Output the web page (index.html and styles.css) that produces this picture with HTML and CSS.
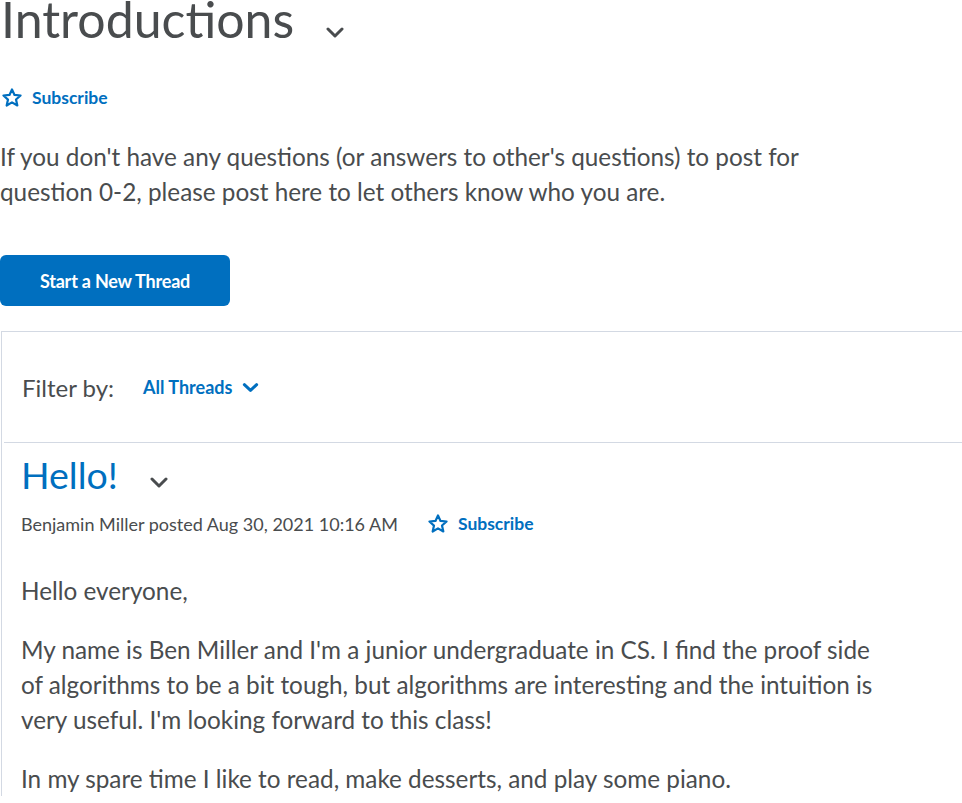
FILE: index.html
```html
<!DOCTYPE html>
<html lang="en">
<head>
<meta charset="utf-8">
<title>Introductions</title>
<link rel="stylesheet" href="styles.css">
</head>
<body>
<div class="page">
  <div class="topic-head">
    <h1 class="topic-title">Introductions</h1>
    <svg class="chev chev-title" viewBox="0 0 18 11" width="18" height="11"><path d="M2 2l7 7 7-7" fill="none" stroke="#494c4e" stroke-width="3" stroke-linecap="round" stroke-linejoin="round"/></svg>
  </div>
  <a class="subscribe subscribe-topic" href="#">
    <svg class="star" viewBox="0 0 24 24" width="22" height="22"><path d="M12 2.6l2.75 6.05 6.6.62-4.98 4.42 1.45 6.5L12 16.8l-5.82 3.4 1.45-6.5-4.98-4.42 6.6-.62z" fill="none" stroke="#006fbf" stroke-width="2.4" stroke-linejoin="round"/></svg>
    <span>Subscribe</span>
  </a>
  <p class="topic-desc">If you don't have any questions (or answers to other's questions) to post for question 0-2, please post here to let others know who you are.</p>
  <button class="btn-primary" type="button">Start a New Thread</button>
  <section class="threads">
    <div class="filter-row">
      <span class="filter-label">Filter by:</span>
      <a class="filter-select" href="#">All Threads
        <svg class="chev" viewBox="0 0 18 11" width="17" height="11"><path d="M2.5 2.5l6.5 6 6.5-6" fill="none" stroke="#006fbf" stroke-width="3.2" stroke-linecap="round" stroke-linejoin="round"/></svg>
      </a>
    </div>
    <article class="thread">
      <div class="thread-head">
        <h2 class="thread-title">Hello!</h2>
        <svg class="chev chev-thread" viewBox="0 0 18 11" width="18" height="11"><path d="M2 2l7 7 7-7" fill="none" stroke="#494c4e" stroke-width="3" stroke-linecap="round" stroke-linejoin="round"/></svg>
      </div>
      <div class="thread-meta">
        <span class="meta-text">Benjamin Miller posted Aug 30, 2021 10:16 AM</span>
        <a class="subscribe" href="#">
          <svg class="star" viewBox="0 0 24 24" width="22" height="22"><path d="M12 2.6l2.75 6.05 6.6.62-4.98 4.42 1.45 6.5L12 16.8l-5.82 3.4 1.45-6.5-4.98-4.42 6.6-.62z" fill="none" stroke="#006fbf" stroke-width="2.4" stroke-linejoin="round"/></svg>
          <span>Subscribe</span>
        </a>
      </div>
      <div class="thread-body">
        <p>Hello everyone,</p>
        <p>My name is Ben Miller and I'm a junior undergraduate in CS. I find the proof side of algorithms to be a bit tough, but algorithms are interesting and the intuition is very useful. I'm looking forward to this class!</p>
        <p>In my spare time I like to read, make desserts, and play some piano.</p>
      </div>
    </article>
  </section>
</div>
</body>
</html>
```

FILE: styles.css
```css
html, body {
  margin: 0;
  padding: 0;
  background: #ffffff;
}
body {
  font-family: Lato, "Open Sans", "Liberation Sans", sans-serif;
  color: #494c4e;
  overflow: hidden;
}
.page {
  padding: 0;
}
.topic-head {
  display: flex;
  align-items: flex-start;
  height: 38px;
}
.topic-title {
  margin: 0;
  font-size: 50px;
  font-weight: 400;
  line-height: 38px;
  color: #494c4e;
  padding-left: 1px;
}
.chev {
  display: block;
  flex: none;
}
.chev-title {
  margin-left: 32px;
  margin-top: 27px;
}
.subscribe {
  display: inline-flex;
  align-items: center;
  gap: 9px;
  color: #006fbf;
  text-decoration: none;
  font-weight: 700;
  font-size: 17.5px;
  line-height: 22px;
}
.subscribe-topic {
  margin-top: 49px;
  margin-left: 1px;
}
.topic-desc {
  margin: 27px 0 0 0;
  font-size: 24.3px;
  line-height: 35px;
  max-width: 830px;
}
.btn-primary {
  display: block;
  margin-top: 46px;
  width: 230px;
  height: 51px;
  border: none;
  border-radius: 6px;
  background: #006fbf;
  color: #ffffff;
  font-family: Lato, "Open Sans", sans-serif;
  font-weight: 700;
  font-size: 18px;
  letter-spacing: -0.2px;
  padding: 0;
}
.threads {
  margin-top: 25px;
  margin-left: 1px;
  border-top: 1px solid #d3d9e3;
  border-left: 1px solid #d3d9e3;
}
.filter-row {
  display: flex;
  align-items: center;
  height: 110px;
  padding-left: 18px;
  margin-left: 2px;
  border-bottom: 1px solid #d3d9e3;
}
.filter-label {
  font-size: 24px;
}
.filter-select {
  display: inline-flex;
  align-items: center;
  gap: 10px;
  margin-left: 29px;
  color: #006fbf;
  text-decoration: none;
  font-weight: 700;
  font-size: 18px;
}
.thread {
  padding: 0 0 0 19px;
}
.thread-head {
  display: flex;
  align-items: flex-start;
  height: 52px;
  margin-top: 6px;
}
.thread-title {
  margin: 0;
  font-size: 37.5px;
  font-weight: 400;
  line-height: 52px;
  color: #006fbf;
}
.chev-thread {
  margin-left: 32px;
  margin-top: 28px;
}
.thread-meta {
  display: flex;
  align-items: center;
  height: 30px;
  margin-top: 8px;
  font-size: 18px;
}
.thread-meta .subscribe {
  margin-left: 29px;
}
.thread-body {
  margin-top: 34px;
}
.thread-body p {
  margin: 0 0 24px 0;
  font-size: 24.3px;
  line-height: 35px;
  max-width: 870px;
}
```
